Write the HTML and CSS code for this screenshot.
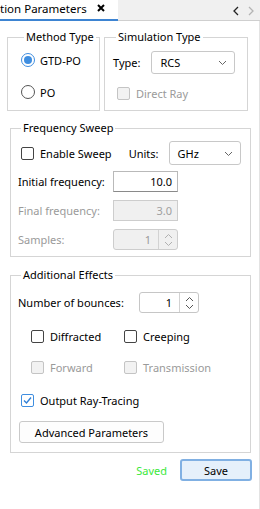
FILE: index.html
```html
<!DOCTYPE html>
<html>
<head>
<meta charset="utf-8">
<link rel="stylesheet" href="styles.css">
</head>
<body>
<div class="tabbar">
  <div class="tab">
    <span class="tab-title">tion Parameters</span>
    <svg class="tab-close" width="8" height="8" viewBox="0 0 8 8"><path d="M1 1L7 7M7 1L1 7" stroke="#000" stroke-width="2"/></svg>
  </div>
  <div class="tab-nav">
    <svg width="8" height="10" viewBox="0 0 8 10"><path d="M6 1L2 5L6 9" fill="none" stroke="#222" stroke-width="1.3"/></svg>
    <svg width="8" height="10" viewBox="0 0 8 10"><path d="M2 1L6 5L2 9" fill="none" stroke="#b4b4b4" stroke-width="1.3"/></svg>
  </div>
</div>
<div class="panel">
  <div class="row-top">
    <fieldset class="group group-method">
      <legend>Method Type</legend>
      <div class="opt-row"><span class="radio radio-on"></span>GTD-PO</div>
      <div class="opt-row"><span class="radio"></span>PO</div>
    </fieldset>
    <fieldset class="group group-sim">
      <legend>Simulation Type</legend>
      <div class="field-row">
        <span class="lbl">Type:</span>
        <div class="combo combo-type"><span>RCS</span><svg class="chev" width="9" height="6" viewBox="0 0 9 6"><path d="M1 1L4.5 4.5L8 1" fill="none" stroke="#666" stroke-width="1"/></svg></div>
      </div>
      <div class="opt-row disabled gap-direct"><span class="check check-dis"></span>Direct Ray</div>
    </fieldset>
  </div>

  <fieldset class="group group-wide group-freq">
    <legend>Frequency Sweep</legend>
    <div class="field-row sweep-row">
      <div class="opt-row"><span class="check"></span>Enable Sweep</div>
      <span class="lbl units">Units:</span>
      <div class="combo combo-units"><span>GHz</span><svg class="chev" width="9" height="6" viewBox="0 0 9 6"><path d="M1 1L4.5 4.5L8 1" fill="none" stroke="#666" stroke-width="1"/></svg></div>
    </div>
    <div class="field-row">
      <span class="lbl lbl-wide">Initial frequency:</span>
      <div class="input">10.0</div>
    </div>
    <div class="field-row disabled">
      <span class="lbl lbl-wide">Final frequency:</span>
      <div class="input input-dis">3.0</div>
    </div>
    <div class="field-row disabled">
      <span class="lbl lbl-wide">Samples:</span>
      <div class="spin spin-dis"><span class="spin-val">1</span><span class="spin-btn"><svg width="9" height="14" viewBox="0 0 9 14"><path d="M1 5L4.5 1.5L8 5M1 9L4.5 12.5L8 9" fill="none" stroke="#b0b0b0" stroke-width="1"/></svg></span></div>
    </div>
  </fieldset>

  <fieldset class="group group-wide group-effects">
    <legend>Additional Effects</legend>
    <div class="field-row">
      <span class="lbl lbl-bounce">Number of bounces:</span>
      <div class="spin spin-bounce"><span class="spin-val">1</span><span class="spin-btn"><svg width="9" height="14" viewBox="0 0 9 14"><path d="M1 5L4.5 1.5L8 5M1 9L4.5 12.5L8 9" fill="none" stroke="#555" stroke-width="1"/></svg></span></div>
    </div>
    <div class="check-grid">
      <div class="opt-row"><span class="check"></span>Diffracted</div>
      <div class="opt-row"><span class="check"></span>Creeping</div>
      <div class="opt-row disabled"><span class="check check-dis"></span>Forward</div>
      <div class="opt-row disabled"><span class="check check-dis"></span>Transmission</div>
    </div>
    <div class="opt-row output-row"><span class="check check-on"><svg width="11" height="11" viewBox="0 0 11 11"><path d="M2 5.5L4.5 8L9 2.5" fill="none" stroke="#2f7fd6" stroke-width="1.4"/></svg></span>Output Ray-Tracing</div>
    <button class="btn btn-adv">Advanced Parameters</button>
  </fieldset>

  <div class="footer">
    <span class="saved">Saved</span>
    <button class="btn btn-save">Save</button>
  </div>
</div>
</body>
</html>
```

FILE: styles.css
```css
* { box-sizing: border-box; }
html, body { margin: 0; padding: 0; }
body {
  width: 260px;
  height: 509px;
  background: #fff;
  font-family: "Noto Sans", "Open Sans", sans-serif;
  font-size: 11px;
  color: #000;
  overflow: hidden;
}
.tabbar {
  height: 21px;
  display: flex;
  background: #f0f0f0;
  border-bottom: 1px solid #cfcfcf;
}
.tab {
  width: 118px;
  height: 21px;
  background: #fff;
  border-bottom: 2px solid #3d84d2;
  display: flex;
  align-items: center;
  margin-bottom: -1px;
}
.tab-title { font-size: 11.5px; line-height: 16px; white-space: nowrap; margin-top: -2px; }
.tab-close { margin-left: 10px; margin-top: -3px; }
.tab-nav {
  margin-left: auto;
  display: flex;
  gap: 7px;
  padding: 6px 5px 0 0;
}
.panel {
  height: 488px;
  border-right: 1px solid #e3e3e3;
  padding: 8px 0 0 0;
}
.row-top {
  display: flex;
  gap: 4px;
  padding-left: 7px;
}
.group {
  margin: 0;
  border: 1px solid #d5d5d5;
  padding: 0;
  min-width: 0;
}
.group legend {
  padding: 0 2px;
  margin-left: 3px;
  line-height: 16px;
  white-space: nowrap;
}
.group-method { width: 93px; padding: 7px 0 9px 13px; }
.group-sim { width: 144px; padding: 6px 0 9px 8px; }
.opt-row {
  display: flex;
  align-items: center;
  height: 16px;
  white-space: nowrap;
}
.group-method .opt-row + .opt-row { margin-top: 16px; }
.radio {
  width: 14px;
  height: 14px;
  border: 1px solid #555;
  border-radius: 50%;
  margin-right: 5px;
  display: flex;
  align-items: center;
  justify-content: center;
  background: #fff;
}
.radio-on { border-color: #3f8ee0; }
.radio-on::after {
  content: "";
  width: 8px;
  height: 8px;
  border-radius: 50%;
  background: #3f8ee0;
}
.check {
  width: 13px;
  height: 13px;
  border: 1px solid #444;
  border-radius: 2px;
  margin-right: 6px;
  background: #fff;
  display: flex;
  align-items: center;
  justify-content: center;
}
.check-dis { border-color: #c4c4c4; background: #f2f2f2; }
.check-on { border-color: #3f8ee0; }
.disabled { color: #9a9a9a; }
.field-row {
  display: flex;
  align-items: center;
  white-space: nowrap;
}
.lbl { margin-right: 11px; }
.combo {
  display: flex;
  align-items: center;
  justify-content: space-between;
  height: 23px;
  border: 1px solid #c8c8c8;
  border-radius: 3px;
  background: #fff;
  padding: 0 7px 0 8px;
}
.combo-type { width: 84px; }
.chev { margin-top: 1px; }
.gap-direct { margin-top: 11px; margin-left: 4px; }
.group-wide {
  margin: 9px 0 0 10px;
  width: 241px;
}
.group-freq { padding: 5px 0 6px 7px; }
.sweep-row .opt-row { padding-left: 3px; }
.sweep-row .check { margin-right: 6px; }
.units { margin-left: 17px; margin-right: 10px; }
.combo-units { width: 72px; height: 24px; }
.lbl-wide { width: 95px; margin-right: 0; }
.group-freq .field-row + .field-row { margin-top: 8px; }
.group-freq .field-row:nth-child(3) { margin-top: 6px; }
.input {
  width: 65px;
  height: 21px;
  border: 1px solid #b9b9b9;
  border-bottom-color: #8a8a8a;
  background: #fff;
  text-align: right;
  padding-right: 5px;
  line-height: 19px;
  color: #000;
}
.input-dis { background: #f0f0f0; border-color: #cdcdcd; color: #a0a0a0; }
.spin {
  display: flex;
  height: 21px;
  border: 1px solid #c6c6c6;
  border-radius: 3px;
  background: #fff;
}
.spin-val { flex: 1; text-align: right; padding-right: 7px; line-height: 19px; }
.spin-btn {
  width: 19px;
  border-left: 1px solid #d2d2d2;
  display: flex;
  align-items: center;
  justify-content: center;
}
.spin-dis { width: 65px; background: #f0f0f0; border-color: #cdcdcd; }
.group-effects { padding: 9px 0 9px 7px; margin-top: 10px; }
.lbl-bounce { width: 121px; margin-right: 0; }
.spin-bounce { width: 60px; }
.check-grid {
  display: grid;
  grid-template-columns: 93px auto;
  row-gap: 15px;
  margin: 15px 0 0 13px;
}
.output-row { margin: 17px 0 0 3px; }
.btn {
  font: inherit;
  color: #000;
  border: 1px solid #c9c9c9;
  border-radius: 3px;
  background: #fdfdfd;
  padding: 0;
  display: block;
}
.btn-adv { width: 145px; height: 22px; margin: 13px 0 0 1px; }
.footer {
  display: flex;
  align-items: center;
  justify-content: flex-end;
  padding: 6px 7px 0 0;
}
.saved { color: #3be83b; margin-right: 13px; }
.btn-save {
  width: 72px;
  height: 22px;
  background: #e5f0fb;
  border: 2px solid #80b0e3;
}
```
